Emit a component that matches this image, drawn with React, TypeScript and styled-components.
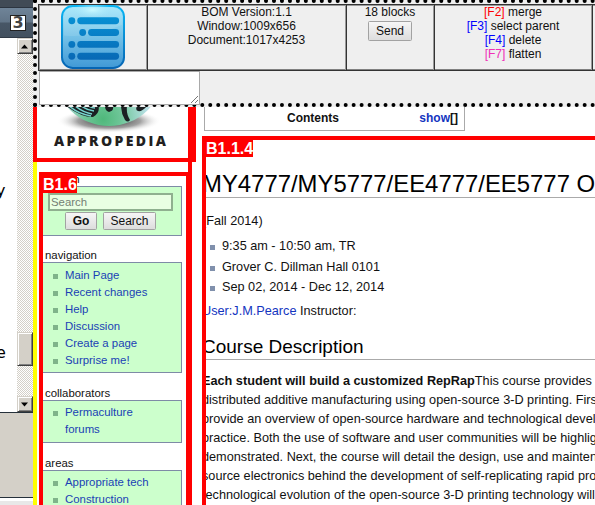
import React from "react";
import styled, { createGlobalStyle, css } from "styled-components";

const Global = createGlobalStyle`
  * { box-sizing: border-box; }
  body { margin: 0; overflow: hidden; background: #fff; font-family: "Liberation Sans", Arial, sans-serif; color: #111; }
  ul, h1, h2, p { margin: 0; padding: 0; font-weight: normal; }
  ul { list-style: none; }
`;

const Desktop = styled.div`
  display: flex;
  width: 595px;
  height: 505px;
  overflow: hidden;
`;

/* ---------- window behind, on the left ---------- */
const BackWindow = styled.aside`
  flex: 0 0 33px;
  display: flex;
  flex-direction: column;
  background: #e8e8e8;
`;
const TitleBar = styled.div`
  height: 38px;
  padding: 15px 0 0 10px;
  background: linear-gradient(#414b56 0 7px, #2c3540 7px 8px, #6f8498 8px, #627588 22px, #475666 23px, #43515f 37px, #303a46 37px);
`;
const CountBox = styled.div`
  width: 16px;
  height: 16px;
  background: #fff;
  border: 1px solid #222;
  font: bold 16px/14px "DejaVu Sans", sans-serif;
  color: #444;
  text-align: center;
`;
const BackBody = styled.div`
  display: flex;
  height: 375px;
  background: #fff;
  border-bottom: 1px solid #25303a;
`;
const BackText = styled.div`
  width: 17px;
  padding-top: 143px;
  overflow: hidden;
  font: 16px/20px "DejaVu Sans", sans-serif;
`;
const Letter = styled.div`
  margin-left: -4px;
  height: 162px;
  color: #000;
`;
const ScrollBar = styled.div`
  width: 16px;
  display: flex;
  flex-direction: column;
  background: repeating-conic-gradient(#d4d0c8 0 25%, #fff 0 50%) 0 0 / 2px 2px;
`;
const raised = css`
  background: #d4d0c8;
  border: 1px solid;
  border-color: #d4d0c8 #404040 #404040 #d4d0c8;
  box-shadow: inset 1px 1px #fff, inset -1px -1px #808080;
`;
const ScrollButton = styled.div`
  ${raised}
  height: 16px;
  display: grid;
  place-items: center;
`;
const Thumb = styled.div`
  ${raised}
  height: 34px;
  margin: 278px 0 30px;
`;
const BackFooter = styled.div`
  height: 85px;
  background: #d4d0c8;
  border-bottom: 1px solid #25303a;
`;
const BackGap = styled.div`
  height: 3px;
  background: #fff;
`;

/* ---------- tool bar ---------- */
const Front = styled.main`
  flex: 1;
  min-width: 0;
  display: flex;
  flex-direction: column;
  overflow: hidden;
`;
const Tool = styled.header`
  position: relative;
  z-index: 2;
  flex: none;
  width: 1009px;
  height: 108px;
  margin-top: -1px;
  border: 4px dotted #000;
  background: #efefef;
  padding: 1px 0 0 1px;
  font-size: 12px;
  line-height: 14px;
`;
const Cells = styled.div`
  display: flex;
  height: 67px;
  width: 960px;
  border: 1px solid #333;
  box-shadow: inset 1px 1px #999, inset 0 -1px #808080;
`;
const Cell = styled.div<{ $w: number }>`
  flex: 0 0 ${(p) => p.$w}px;
  border-right: 1px solid #333;
  box-shadow: inset -1px 0 #999;
  padding-right: 1px;
  text-align: center;
`;
const Key = styled.span<{ $c: string }>`
  color: ${(p) => p.$c};
`;
const NoteField = styled.div`
  width: 161px;
  height: 34px;
  margin-left: 1px;
  background: #fff;
  border: 1px solid #a9a9a9;
  display: flex;
  justify-content: flex-end;
  align-items: flex-end;
`;
const GreyButton = styled.button<{ $w: number; $h: number; $bold?: boolean }>`
  width: ${(p) => p.$w}px;
  height: ${(p) => p.$h}px;
  padding: 0;
  border: 1px solid #a2a2a2;
  border-radius: 1.5px;
  background: linear-gradient(#f6f6f6, #dddddd);
  font: ${(p) => (p.$bold ? "bold" : "normal")} 12px/14px "Liberation Sans", Arial, sans-serif;
  color: #111;
`;
const SendButton = styled(GreyButton)`
  margin-top: 2px;
`;

/* ---------- page ---------- */
const Page = styled.div`
  display: flex;
  height: 398px;
`;
const Sidebar = styled.div`
  flex: 0 0 163px;
  display: flex;
  flex-direction: column;
`;
const LogoBlock = styled.div`
  flex: none;
  height: 55px;
  border: 4px solid #f00;
  border-top: 0;
  border-right-width: 8px;
`;
const SideRest = styled.div`
  width: 159px;
  height: 343px;
  border-left: 4px solid #ff0;
  border-right: 4px solid #f00;
  padding: 10px 0 0 2px;
`;
const PortalBlock = styled.div`
  position: relative;
  width: 151px;
  height: 343px;
  border: 4px solid #f00;
  padding-top: 10px;
  overflow: hidden;
`;
const Tag = styled.span<{ $w: number }>`
  position: absolute;
  left: 0;
  top: 0;
  width: ${(p) => p.$w}px;
  height: 17px;
  background: #f00;
  color: #fff;
  font-weight: bold;
  font-size: 16px;
  line-height: 17px;
`;
const HiddenLabel = styled.span`
  position: absolute;
  left: 2.5px;
  top: -4px;
  font-size: 11.4px;
  line-height: 14px;
`;
const Panel = styled.div<{ $h: number }>`
  width: 139px;
  height: ${(p) => p.$h}px;
  border: 1px solid #7e8ba6;
  border-left: 0;
  background: #cfc;
`;
const SearchPanel = styled(Panel)`
  padding: 6px 0 0 5px;
`;
const SearchInput = styled.input`
  display: block;
  width: 125px;
  height: 18px;
  padding: 0 1px;
  border: 2px solid #8fb08f;
  background: #e9ffe3;
  font: 11.4px "Liberation Sans", Arial, sans-serif;
  &::placeholder { color: #748074; opacity: 1; }
`;
const Buttons = styled.div`
  display: flex;
  gap: 6px;
  padding: 1px 0 0 17px;
`;
const SideTitle = styled.div<{ $gap: number }>`
  margin-top: ${(p) => p.$gap}px;
  padding-left: 2px;
  height: 14px;
  font-size: 11.4px;
  line-height: 14px;
`;
const SideItem = styled.li<{ $plain?: boolean }>`
  display: flex;
  align-items: center;
  height: 17px;
  padding-left: 10px;
  font-size: 11.4px;
  line-height: 17px;
  color: #1a3fb5;
  &::before {
    content: "";
    width: 5px;
    height: 5px;
    margin: 2px 7px 0 0;
    background: ${(p) => (p.$plain ? "transparent" : "#7fb48a")};
  }
`;
const SideList = styled.ul<{ $top: number }>`
  padding-top: ${(p) => p.$top}px;
`;

const Content = styled.div`
  flex: 1;
  min-width: 0;
  margin-left: 6px;
`;
const TocBox = styled.div`
  display: flex;
  width: 261px;
  height: 24px;
  margin-left: 2px;
  padding: 3px 6px 0 82px;
  border: 1px solid #aaa;
  border-top: 0;
  justify-content: space-between;
  font-weight: bold;
  font-size: 12px;
  line-height: 16px;
`;
const Blue = styled.span`
  color: #1335bf;
`;
const Article = styled.article`
  position: relative;
  width: 820px;
  height: 400px;
  margin-top: 5px;
  border: 4px solid #f00;
  overflow: hidden;
  font-size: 12.7px;
  white-space: nowrap;
`;
const ArticleText = styled.div`
  margin-left: -4px;
  padding-top: 28px;
`;
const Title = styled.h1`
  height: 30px;
  border-bottom: 1px solid #aaa;
  color: #000;
  font-size: 23.9px;
  line-height: 31px;
`;
const Line = styled.p<{ $h: number; $top?: number }>`
  height: ${(p) => p.$h}px;
  margin-top: ${(p) => p.$top ?? 0}px;
  line-height: ${(p) => p.$h}px;
`;
const Facts = styled.ul`
  margin-top: 5px;
  padding-left: 8px;
`;
const Fact = styled.li`
  display: flex;
  align-items: center;
  height: 20.5px;
  &::before {
    content: "";
    width: 5px;
    height: 5px;
    margin: 3px 7px 0 0;
    background: #8090ac;
  }
`;
const SubTitle = styled.h2`
  height: 25px;
  margin-top: 14px;
  margin-bottom: 12px;
  border-bottom: 1px solid #aaa;
  color: #000;
  font-size: 19px;
  line-height: 24px;
`;

const Arrow = ({ down }: { down?: boolean }) => (
  <svg width="8" height="5" viewBox="0 0 8 5">
    <path d={down ? "M0 0.5h7l-3.5 4z" : "M0 4.5h7l-3.5-4z"} fill="#000" />
  </svg>
);

const ListIcon = () => (
  <svg width="64" height="64" viewBox="0 0 65 65">
    <defs>
      <linearGradient id="tile" x1="0" y1="0" x2="0" y2="1">
        <stop offset="0" stopColor="#a3e7fb" />
        <stop offset=".35" stopColor="#83cdec" />
        <stop offset="1" stopColor="#4199d6" />
      </linearGradient>
      <linearGradient id="edge" x1="0" y1="0" x2="0" y2="1">
        <stop offset="0" stopColor="#08b5f4" />
        <stop offset="1" stopColor="#0665b4" />
      </linearGradient>
      <linearGradient id="mark" gradientUnits="userSpaceOnUse" x1="0" y1="10" x2="0" y2="56">
        <stop offset="0" stopColor="#0792d5" />
        <stop offset="1" stopColor="#0868b5" />
      </linearGradient>
      <radialGradient id="shine">
        <stop offset="0" stopColor="#cbfaff" />
        <stop offset="1" stopColor="#a3e7fb" stopOpacity="0" />
      </radialGradient>
    </defs>
    <rect x="1" y="1" width="63" height="63" rx="11" fill="url(#tile)" stroke="url(#edge)" strokeWidth="2" />
    <path d="M3 31Q32 34 62 20V12Q62 3 53 3H12Q3 3 3 12z" fill="#fff" opacity=".1" />
    <ellipse cx="32" cy="5" rx="20" ry="8" fill="url(#shine)" />
    <g fill="url(#mark)">
      <circle cx="11" cy="16" r="3.5" />
      <rect x="16.5" y="12.5" width="42.5" height="7" rx="3.5" />
      <circle cx="22" cy="28" r="3.5" />
      <rect x="27.5" y="24.5" width="31.5" height="7" rx="3.5" />
      <circle cx="11" cy="40" r="3.5" />
      <rect x="16.5" y="36.5" width="42.5" height="7" rx="3.5" />
      <circle cx="11" cy="52" r="3.5" />
      <rect x="16.5" y="48.5" width="42.5" height="7" rx="3.5" />
    </g>
  </svg>
);

const GlobeLogo = () => (
  <svg width="151" height="51" viewBox="37 107 151 51" style={{ display: "block" }}>
    <defs>
      <radialGradient id="shade">
        <stop offset="0" stopColor="#222" />
        <stop offset=".6" stopColor="#777" stopOpacity=".7" />
        <stop offset="1" stopColor="#fff" stopOpacity="0" />
      </radialGradient>
      <radialGradient id="sea" gradientUnits="userSpaceOnUse" cx="103" cy="119" r="44">
        <stop offset="0" stopColor="#4fb87b" />
        <stop offset=".4" stopColor="#6dc597" />
        <stop offset="1" stopColor="#b7dfe3" />
      </radialGradient>
      <clipPath id="ball">
        <circle cx="109" cy="71" r="55" />
      </clipPath>
    </defs>
    <ellipse cx="109" cy="121" rx="52" ry="12" fill="url(#shade)" />
    <g clipPath="url(#ball)">
      <rect x="55" y="100" width="108" height="30" fill="url(#sea)" />
      <path d="M62 104h36q3 9-5 13-13 0-28-12z" fill="#1b2023" />
      <path d="M68 105q10 9 23 11M74 105q8 7 18 9M80 105q6 5 14 6M87 105q4 3 8 3" stroke="#75d3ce" strokeWidth="1.5" fill="none" />
      <path d="M105 106h8q1 5-4 6-4-1-4-6zM121 106h6q-1 8 3 14-2 3-5 0-4-7-4-14zM137 106h10q-5 6-9 5-3-1-1-5z" fill="#1b2023" />
    </g>
    <text x="54" y="146" fontFamily="Open Sans, sans-serif" fontSize="14" fontWeight="800" textLength="112" fill="#231f20">
      APPROPEDIA
    </text>
  </svg>
);

const navigation = ["Main Page", "Recent changes", "Help", "Discussion", "Create a page", "Surprise me!"];
const facts = ["9:35 am - 10:50 am, TR", "Grover C. Dillman Hall 0101", "Sep 02, 2014 - Dec 12, 2014"];
const description = [
  "distributed additive manufacturing using open-source 3-D printing. First",
  "provide an overview of open-source hardware and technological development",
  "practice. Both the use of software and user communities will be highlighted",
  "demonstrated. Next, the course will detail the design, use and maintenance",
  "source electronics behind the development of self-replicating rapid prototypers",
  "technological evolution of the open-source 3-D printing technology will be",
];

export default function App() {
  return (
    <Desktop>
      <Global />
      <BackWindow>
        <TitleBar>
          <CountBox>3</CountBox>
        </TitleBar>
        <BackBody>
          <BackText>
            <Letter>y</Letter>
            <Letter>e</Letter>
          </BackText>
          <ScrollBar>
            <ScrollButton><Arrow /></ScrollButton>
            <Thumb />
            <ScrollButton><Arrow down /></ScrollButton>
          </ScrollBar>
        </BackBody>
        <BackFooter />
        <BackGap />
      </BackWindow>

      <Front>
        <Tool>
          <Cells>
            <Cell $w={109}><ListIcon /></Cell>
            <Cell $w={199}>
              BOM Version:1.1<br />Window:1009x656<br />Document:1017x4253
            </Cell>
            <Cell $w={88}>
              18 blocks<br />
              <SendButton $w={44} $h={20}>Send</SendButton>
            </Cell>
            <Cell $w={158}>
              <Key $c="#f00">[F2]</Key> merge<br />
              <Key $c="#00f">[F3]</Key> select parent<br />
              <Key $c="#00f">[F4]</Key> delete<br />
              <Key $c="#f02fb8">[F7]</Key> flatten
            </Cell>
          </Cells>
          <NoteField>
            <svg width="9" height="9" viewBox="0 0 9 9">
              <path d="M1 8L8 1M5 8L8 5" stroke="#777" strokeWidth="1" />
            </svg>
          </NoteField>
        </Tool>

        <Page>
          <Sidebar>
            <LogoBlock><GlobeLogo /></LogoBlock>
            <SideRest>
              <PortalBlock>
                <HiddenLabel>search</HiddenLabel>
                <Tag $w={34}>B1.6</Tag>
                <SearchPanel $h={50}>
                  <SearchInput placeholder="Search" />
                  <Buttons>
                    <GreyButton $w={32} $h={18} $bold>Go</GreyButton>
                    <GreyButton $w={53} $h={18}>Search</GreyButton>
                  </Buttons>
                </SearchPanel>
                <SideTitle $gap={12}>navigation</SideTitle>
                <Panel $h={111}>
                  <SideList $top={4}>
                    {navigation.map((t) => <SideItem key={t}>{t}</SideItem>)}
                  </SideList>
                </Panel>
                <SideTitle $gap={13}>collaborators</SideTitle>
                <Panel $h={43}>
                  <SideList $top={3}>
                    <SideItem>Permaculture</SideItem>
                    <SideItem $plain>forums</SideItem>
                  </SideList>
                </Panel>
                <SideTitle $gap={13}>areas</SideTitle>
                <Panel $h={80}>
                  <SideList $top={3}>
                    <SideItem>Appropriate tech</SideItem>
                    <SideItem>Construction</SideItem>
                  </SideList>
                </Panel>
              </PortalBlock>
            </SideRest>
          </Sidebar>

          <Content>
            <TocBox>
              <span>Contents</span>
              <span><Blue>show</Blue>[]</span>
            </TocBox>
            <Article>
              <Tag $w={47}>B1.1.4</Tag>
              <ArticleText>
                <Title>MY4777/MY5777/EE4777/EE5777 Open</Title>
                <Line $h={19} $top={14}>(Fall 2014)</Line>
                <Facts>
                  {facts.map((t) => <Fact key={t}>{t}</Fact>)}
                </Facts>
                <Line $h={19} $top={4}><Blue>User:J.M.Pearce</Blue> Instructor:</Line>
                <SubTitle>Course Description</SubTitle>
                <Line $h={19}><b>Each student will build a customized RepRap</b>This course provides an</Line>
                {description.map((t) => <Line $h={19} key={t}>{t}</Line>)}
              </ArticleText>
            </Article>
          </Content>
        </Page>
      </Front>
    </Desktop>
  );
}
